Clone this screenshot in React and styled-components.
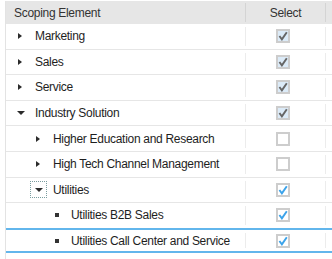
import React from "react";
import styled, { createGlobalStyle } from "styled-components";

const GlobalStyle = createGlobalStyle`
  html, body {
    margin: 0;
    padding: 0;
    background: #ffffff;
  }
  body {
    font-family: "Liberation Sans", Arial, sans-serif;
    font-size: 12px;
    letter-spacing: -0.3px;
    color: #1e1e1e;
  }
`;

const Table = styled.div`
  width: 332px;
  height: 259px;
  padding-left: 5px;
  padding-top: 1px;
  box-sizing: border-box;
  overflow: hidden;
`;

const Grid = styled.div`
  border-left: 1px solid #e3e3e3;
  height: 258px;
`;

const HeaderRow = styled.div`
  display: grid;
  grid-template-columns: 239px 81px 1fr;
  height: 23px;
  background: #e6e6e6;
  color: #333;
`;

const HeaderCell = styled.div`
  display: flex;
  align-items: center;
  justify-content: ${(p) => (p.center ? "center" : "flex-start")};
  padding-left: ${(p) => (p.center ? "0" : "8px")};
  border-left: ${(p) => (p.center ? "1px solid #d4d4d4" : "none")};
  border-right: ${(p) => (p.center ? "1px solid #d4d4d4" : "none")};
  margin: 2px 0;
`;

const Row = styled.div`
  display: grid;
  grid-template-columns: 239px 81px 1fr;
  height: 25.6px;
  box-sizing: border-box;
  border-bottom: 1px solid #e6e6e6;
  border-top: ${(p) => (p.selected ? "2px solid #62b6ec" : "none")};
  ${(p) => p.selected && "border-bottom: 2px solid #62b6ec; margin-top: -1px;"}
`;

const NameCell = styled.div`
  display: flex;
  align-items: center;
  padding-left: ${(p) => 6 + p.level * 18}px;
  white-space: nowrap;
`;

const Toggle = styled.div`
  width: 17px;
  height: 17px;
  box-sizing: border-box;
  margin-right: 6px;
  display: flex;
  align-items: center;
  justify-content: center;
  flex-shrink: 0;
  border: 1px ${(p) => (p.focused ? "dotted #7a9ea0" : "solid transparent")};
`;

const ArrowRight = styled.span`
  width: 0;
  height: 0;
  border-top: 3.5px solid transparent;
  border-bottom: 3.5px solid transparent;
  border-left: 4.5px solid #2b2b2b;
  margin-left: -2px;
`;

const ArrowDown = styled.span`
  width: 0;
  height: 0;
  border-left: 4px solid transparent;
  border-right: 4px solid transparent;
  border-top: 4.5px solid #2b2b2b;
`;

const Bullet = styled.span`
  width: 4px;
  height: 4px;
  background: #333;
`;

const SelectCell = styled.div`
  display: flex;
  align-items: center;
  justify-content: center;
  margin: 3px 0;
  border-left: 1px solid #ececec;
  border-right: 1px solid #ececec;
  padding-right: 5px;
`;

const Box = styled.span`
  width: 14px;
  height: 14px;
  box-sizing: border-box;
  border: 2px solid #cdcdcd;
  background: ${(p) => (p.state === "locked" ? "#dcebf8" : "#fff")};
  display: flex;
  align-items: center;
  justify-content: center;
`;

function Check({ state }) {
  if (state === "empty") return <Box state={state} />;
  const color = state === "locked" ? "#666666" : "#3ba3ea";
  return (
    <Box state={state}>
      <svg width="10" height="10" viewBox="0 0 10 10">
        <path d="M1.4 5 L3.9 8.4 L8.8 1.2" fill="none" stroke={color} strokeWidth="1.9" />
      </svg>
    </Box>
  );
}

const rows = [
  { name: "Marketing", level: 0, kind: "closed", check: "locked" },
  { name: "Sales", level: 0, kind: "closed", check: "locked" },
  { name: "Service", level: 0, kind: "closed", check: "locked" },
  { name: "Industry Solution", level: 0, kind: "open", check: "locked" },
  { name: "Higher Education and Research", level: 1, kind: "closed", check: "empty" },
  { name: "High Tech Channel Management", level: 1, kind: "closed", check: "empty" },
  { name: "Utilities", level: 1, kind: "open", check: "checked", focused: true },
  { name: "Utilities B2B Sales", level: 2, kind: "leaf", check: "checked" },
  { name: "Utilities Call Center and Service", level: 2, kind: "leaf", check: "checked", selected: true },
];

export default function App() {
  return (
    <>
      <GlobalStyle />
      <Table>
        <Grid>
          <HeaderRow>
            <HeaderCell>Scoping Element</HeaderCell>
            <HeaderCell center>Select</HeaderCell>
            <div />
          </HeaderRow>
          {rows.map((r) => (
            <Row key={r.name} selected={r.selected}>
              <NameCell level={r.level}>
                <Toggle focused={r.focused}>
                  {r.kind === "closed" && <ArrowRight />}
                  {r.kind === "open" && <ArrowDown />}
                  {r.kind === "leaf" && <Bullet />}
                </Toggle>
                {r.name}
              </NameCell>
              <SelectCell>
                <Check state={r.check} />
              </SelectCell>
              <div />
            </Row>
          ))}
        </Grid>
      </Table>
    </>
  );
}
